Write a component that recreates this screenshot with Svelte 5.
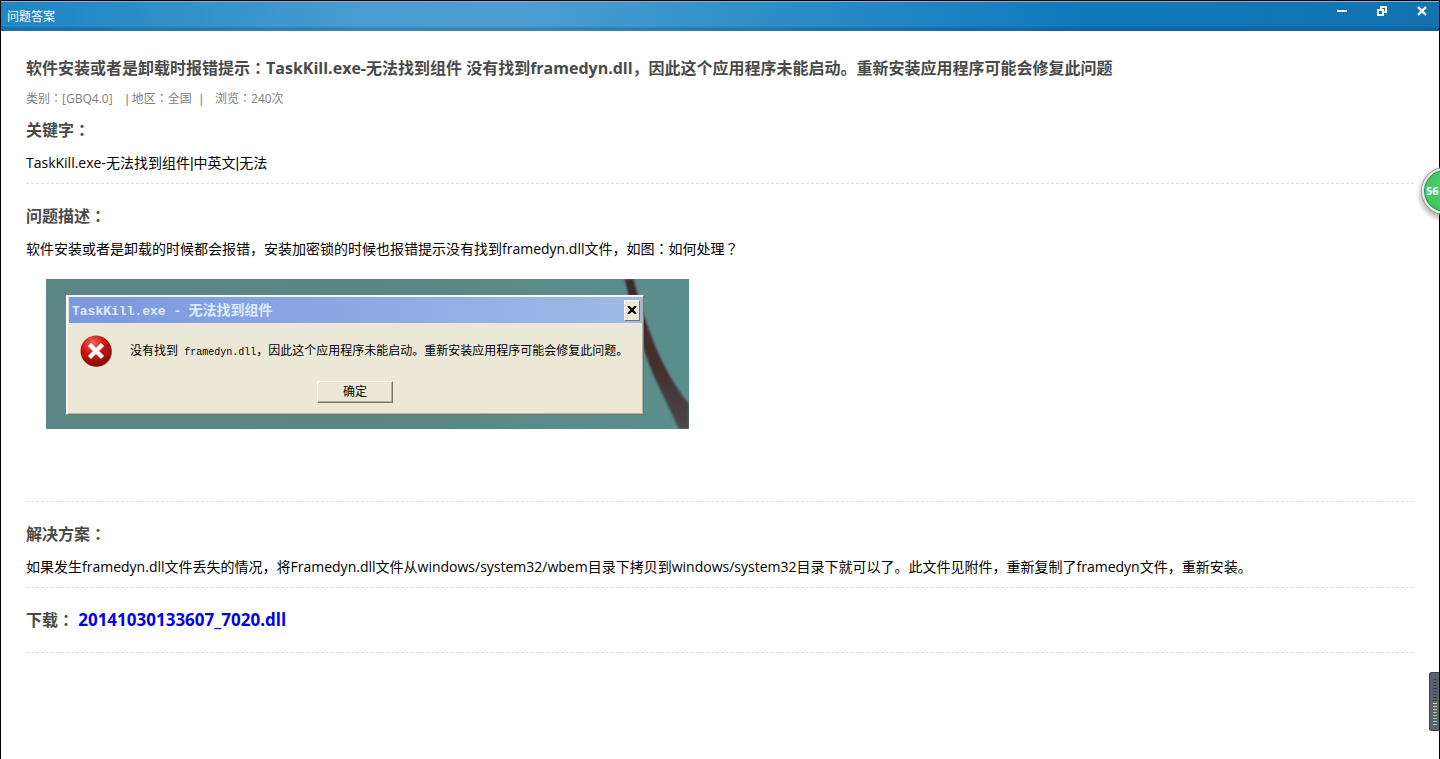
<script>
	let category = '[GBQ4.0]';
	let region = '全国';
	let views = 240;
	let speed = 56;
	let file = '20141030133607_7020.dll';
	let keywords = ['TaskKill.exe-无法找到组件', '中英文', '无法'];
	// the lower half of the meter is lit, from yellow to cyan
	let bars = Array.from({ length: 16 }, (_, i) => (i < 8 ? '#363b46' : `hsl(${66 + (i - 8) * 14}, 60%, 68%)`));
</script>

<div class="desktop">
	<div class="window">
		<header>
			<span class="caption">问题答案</span>
			<div class="controls">
				<button aria-label="最小化">
					<svg width="12" height="12" viewBox="0 0 12 12"><path d="M1 5h10v2H1z" fill="#fff" /></svg>
				</button>
				<button aria-label="还原">
					<svg width="12" height="12" viewBox="0 0 12 12" fill="none" stroke="#fff" stroke-width="2" shape-rendering="crispEdges">
						<path d="M5 4V2h5v5H8" />
						<path d="M2 5h5v5H2z" />
					</svg>
				</button>
				<button aria-label="关闭">
					<svg width="12" height="12" viewBox="0 0 12 12"><path d="M2 2l8 8M10 2l-8 8" stroke="#fff" stroke-width="2.4" /></svg>
				</button>
			</div>
		</header>

		<main>
			<h1>软件安装或者是卸载时报错提示<span class="mid">：</span>TaskKill.exe-无法找到组件 没有找到framedyn.dll，因此这个应用程序未能启动。重新安装应用程序可能会修复此问题</h1>
			<div class="meta">
				<span>类别<span class="mid">：</span>{category}</span>
				<span class="region"><span class="bar">|</span> 地区<span class="mid">：</span>{region}</span>
				<span class="sep"><span class="bar">|</span></span>
				<span>浏览<span class="mid">：</span>{views}次</span>
			</div>

			<section class="first">
				<h2>关键字<span class="mid">：</span></h2>
				<p>{#each keywords as word, i}{#if i}<span class="bar">|</span>{/if}{word}{/each}</p>
			</section>

			<section class="problem">
				<h2>问题描述<span class="mid">：</span></h2>
				<p>软件安装或者是卸载的时候都会报错，安装加密锁的时候也报错提示没有找到framedyn.dll文件，如图<span class="mid">：</span>如何处理<span class="mid">？</span></p>
				<div class="shot">
					<svg class="cord" width="80" height="150" viewBox="0 0 80 150">
						<defs>
							<linearGradient id="cord" x1="0" y1="0" x2="0" y2="1">
								<stop offset="0" stop-color="#3b2a2c" />
								<stop offset="0.6" stop-color="#46302f" />
								<stop offset="1" stop-color="#48494b" />
							</linearGradient>
						</defs>
						<path d="M15 -2C25 38 35 78 50 108C58 124 64 138 71 152H84V130C66 108 52 84 42 56C35 38 29 18 24 -2Z" fill="url(#cord)" />
					</svg>
					<div class="dialog">
						<div class="dialog-title">
							<span><span class="mono">TaskKill.exe -</span>{'  '}无法找到组件</span>
							<button class="dialog-close" aria-label="关闭提示">
								<svg width="10" height="8" viewBox="0 0 10 8"><path d="M1 0l8 8M9 0l-8 8" stroke="#000" stroke-width="2.2" /></svg>
							</button>
						</div>
						<div class="dialog-body">
							<svg width="34" height="34" viewBox="0 0 34 34">
								<defs>
									<radialGradient id="err" cx="0.4" cy="0.25" r="0.8">
										<stop offset="0" stop-color="#ee6a5c" />
										<stop offset="0.45" stop-color="#d01414" />
										<stop offset="1" stop-color="#7c0606" />
									</radialGradient>
								</defs>
								<circle cx="17" cy="18" r="15" fill="#6b5a50" opacity="0.7" />
								<circle cx="16" cy="17" r="15.5" fill="url(#err)" />
								<path d="M9.500 10.500l13 13M22.500 10.500l-13 13" stroke="#fff" stroke-width="4.500" />
							</svg>
							<p>没有找到{'  '}<span class="mono">framedyn.dll</span>，因此这个应用程序未能启动。重新安装应用程序可能会修复此问题。</p>
						</div>
						<button class="ok">确定</button>
					</div>
				</div>
			</section>

			<section>
				<h2>解决方案<span class="mid">：</span></h2>
				<p>如果发生framedyn.dll文件丢失的情况，将Framedyn.dll文件从windows/system32/wbem目录下拷贝到windows/system32目录下就可以了。此文件见附件，重新复制了framedyn文件，重新安装。</p>
			</section>

			<section class="download">
				<h2>下载<span class="mid">：</span> <a href="#{file}">{file}</a></h2>
			</section>
		</main>
	</div>

	<div class="ball">{speed}</div>
	<div class="meter">
		{#each bars as color}
			<i style="background: {color}"></i>
		{/each}
	</div>
</div>

<style>
	:global(body) {
		margin: 0;
		background: #fff;
	}
	.desktop {
		position: relative;
		overflow: hidden;
	}
	.window {
		box-sizing: border-box;
		min-height: 100vh;
		border: 1px solid #000;
		border-bottom: 0;
		font-family: "Open Sans", "Noto Sans CJK SC", sans-serif;
		font-size: 14px;
		color: #000;
	}
	header {
		display: flex;
		justify-content: space-between;
		box-sizing: border-box;
		height: 30px;
		padding: 0 6px;
		border-top: 1px solid #7db4d8;
		background:
			linear-gradient(rgba(0, 30, 60, 0.2), rgba(0, 30, 60, 0.2)) bottom / 100% 4px no-repeat,
			linear-gradient(100deg, #1f86c4 0%, #2389c6 5%, #4a9dd0 26%, #4d9fd1 36%, #2f8fc9 52%, #1a80c0 68%, #1078b9 76%, #1373b0 100%);
	}
	.caption {
		font-size: 12px;
		line-height: 30px;
		color: #fff;
	}
	.controls {
		display: flex;
		gap: 28px;
		padding: 3px 5px 0 0;
	}
	button {
		padding: 0;
		border: 0;
		background: none;
		font: inherit;
	}
	.controls button {
		width: 12px;
		height: 12px;
	}
	svg {
		display: block;
	}
	main {
		padding: 25px;
	}
	h1,
	h2 {
		margin: 0;
		font-size: 16px;
		line-height: 24px;
		font-weight: bold;
		color: #4a4a4a;
	}
	/* punctuation centred in its cell */
	.mid {
		font-family: "Noto Sans CJK TC", sans-serif;
		line-height: 1;
	}
	.bar {
		font-family: "Liberation Sans", sans-serif;
		line-height: 1;
	}
	.meta {
		display: flex;
		margin: 9px 0;
		font-size: 12px;
		line-height: 20px;
		color: #808080;
	}
	.region {
		margin-left: 13px;
	}
	.sep {
		margin: 0 12px 0 8px;
	}
	section {
		padding: 20px 0 10px;
		border-bottom: 1px dashed #ddd;
	}
	.first {
		padding-top: 0;
	}
	section > p {
		margin: 11px 0 0;
		line-height: 20px;
	}
	.problem {
		padding-bottom: 72px;
	}
	.download {
		padding-bottom: 20px;
	}
	a {
		font-size: 17px;
		line-height: 1;
		color: #00e;
		text-decoration: none;
	}
	.shot {
		position: relative;
		box-sizing: border-box;
		width: 643px;
		height: 150px;
		margin: 20px 0 0 20px;
		padding: 16px 45px 14px 20px;
		overflow: hidden;
		background: linear-gradient(90deg, #5a8786, #5a8584 50%, #5b8f8e);
	}
	.cord {
		position: absolute;
		top: 0;
		right: 0;
		filter: blur(1px);
	}
	.dialog {
		position: relative;
		box-sizing: border-box;
		height: 120px;
		padding: 1px;
		border: 1px solid;
		border-color: #fff #77766a #77766a #fff;
		background: #ebe8d7;
		box-shadow: inset 1px 1px #f6f4ea, inset -1px -1px #b5b2a2;
	}
	.dialog-title {
		display: flex;
		justify-content: space-between;
		align-items: center;
		height: 26px;
		margin: 0 0 0 1px;
		padding: 0 2px 0 3px;
		background: linear-gradient(90deg, #7b98de, #9ebaea);
		font-weight: bold;
		line-height: 20px;
		color: #dcebff;
		white-space: pre;
	}
	.dialog-close {
		display: flex;
		align-items: center;
		justify-content: center;
		width: 16px;
		height: 21px;
		border: 1px solid;
		border-color: #fff #77766a #77766a #fff;
		background: #ebe8d7;
	}
	.dialog-body {
		display: flex;
		gap: 16px;
		padding: 11px 12px 0;
		font-size: 12px;
		line-height: 16px;
	}
	.dialog-body svg {
		flex: none;
	}
	.dialog-body p {
		margin: 9px 0 0;
		white-space: pre;
	}
	.mono {
		font-family: "Liberation Mono", monospace;
		line-height: 1;
	}
	.dialog-title .mono {
		font-size: 13px;
	}
	.dialog-body .mono {
		font-size: 10px;
	}
	.ok {
		display: block;
		width: 76px;
		height: 22px;
		margin: 13px auto 0;
		border: 1px solid;
		border-color: #fff #77766a #77766a #fff;
		background: #ebe8d7;
		box-shadow: inset -1px -1px #b5b2a2;
		font-size: 12px;
		line-height: 18px;
	}
	.ball {
		position: absolute;
		top: 168px;
		right: -28px;
		box-sizing: border-box;
		width: 46px;
		height: 46px;
		padding-left: 2px;
		border: 2px solid #e8e8e8;
		border-radius: 50%;
		background: radial-gradient(circle at 50% 45%, #4fd070 0%, #43c862 60%, #2fa552 100%);
		box-shadow: 0 0 0 1px #999, inset 0 0 0 1px #1d8a4c, 0 3px 5px 2px rgba(0, 0, 0, 0.3);
		font: bold 11px/42px "Noto Sans", sans-serif;
		color: #fff;
	}
	.meter {
		position: absolute;
		top: 672px;
		right: 1px;
		display: flex;
		flex-direction: column;
		gap: 2px;
		box-sizing: border-box;
		width: 10px;
		height: 59px;
		padding: 6px 2px 0 3px;
		border: 1px solid #3c414c;
		border-right: 0;
		border-radius: 3px 0 0 3px;
		background: #5c6270;
	}
	.meter i {
		height: 1px;
	}
</style>
